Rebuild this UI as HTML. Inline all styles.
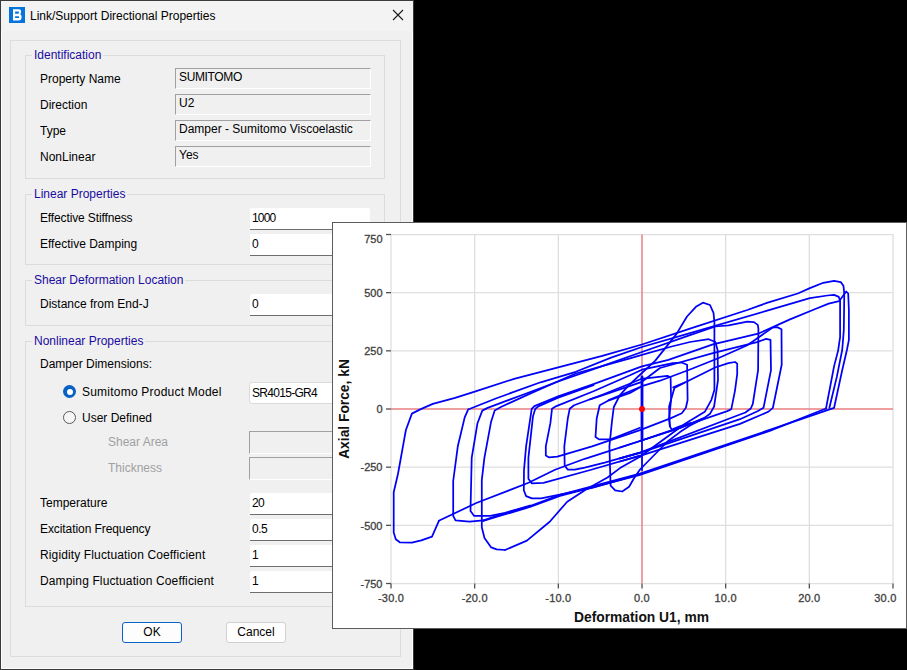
<!DOCTYPE html>
<html><head><meta charset="utf-8">
<style>
*{margin:0;padding:0;box-sizing:border-box}
html,body{width:907px;height:670px;overflow:hidden;background:#000}
body{position:relative;font-family:"Liberation Sans",sans-serif;font-size:12px;color:#000}
.a{position:absolute}
.t{position:absolute;white-space:nowrap;font-size:12px;line-height:14px}
#dlg{left:0;top:0;width:414px;height:670px;background:#f0f0f0;border:1px solid #3a3a3a}
#dlg .in{position:absolute;left:0;top:0;right:0;bottom:0;border:1px solid #fdfdfd;border-top:none}
#title{left:0;top:0;width:412px;height:30px;background:#f3f3f3}
.gb{position:absolute;border:1px solid #dcdcdc}
.gt{position:absolute;white-space:nowrap;font-size:12px;line-height:14px;color:#1a0ca0;background:#f0f0f0;padding:0 2px}
.ro{position:absolute;height:21px;border-top:1px solid #a0a0a0;border-left:1px solid #a0a0a0;border-bottom:1px solid #fff;border-right:1px solid #fff;background:#f0f0f0}
.ed{position:absolute;height:22px;background:#fff;border-bottom:1px solid #6e6e6e;border-radius:2px 2px 0 0}
.dis{position:absolute;height:23px;border-top:1px solid #a0a0a0;border-left:1px solid #a0a0a0;border-bottom:1px solid #fff;border-right:1px solid #fff;background:#f0f0f0}
.btn{position:absolute;height:21px;background:#fdfdfd;border:1px solid #d0d0d0;border-radius:3px;text-align:center;line-height:19px}
#chart{left:332px;top:222px;width:575px;height:407px;background:#fff;border:1px solid #5c5c5c}
</style></head><body>
<div id="dlg" class="a"><div class="in"></div>
  <div id="title" class="a"></div>
</div>
<!-- icon -->
<div class="a" style="left:9px;top:7px;width:16px;height:16px;background:#0574dc"></div>
<svg class="a" style="left:9px;top:7px" width="16" height="16" viewBox="0 0 16 16"><path d="M4 2.2 H10.2 C11.5 2.2 12.1 3.2 12.1 4.5 C12.1 5.8 11.6 6.6 11.3 7.2 C12.1 7.6 12.6 8.5 12.6 9.9 C12.6 12.1 11.5 13.5 9.8 13.5 H4 Z M6.1 4.4 V6.7 H9 C9.7 6.7 10 6.2 10 5.55 C10 4.9 9.7 4.4 9 4.4 Z M6.1 9.2 V11.1 H9.2 C9.9 11.1 10.2 10.7 10.2 10.15 C10.2 9.6 9.9 9.2 9.2 9.2 Z" fill="#fff" fill-rule="evenodd"/></svg>
<div class="t" style="left:30px;top:9px">Link/Support Directional Properties</div>
<svg class="a" style="left:392px;top:9px" width="12" height="12" viewBox="0 0 12 12"><path d="M1 1L11 11M11 1L1 11" stroke="#1a1a1a" stroke-width="1.1"/></svg>

<div class="gb" style="left:10px;top:40px;width:391px;height:617px"></div>

<!-- Identification -->
<div class="gb" style="left:25px;top:55px;width:360px;height:124px"></div>
<div class="gt" style="left:32px;top:48px">Identification</div>
<div class="t" style="left:40px;top:72px">Property Name</div>
<div class="t" style="left:40px;top:98px">Direction</div>
<div class="t" style="left:40px;top:124px">Type</div>
<div class="t" style="left:40px;top:150px">NonLinear</div>
<div class="ro" style="left:175px;top:68px;width:196px"></div>
<div class="ro" style="left:175px;top:94px;width:196px"></div>
<div class="ro" style="left:175px;top:120px;width:196px"></div>
<div class="ro" style="left:175px;top:146px;width:196px"></div>
<div class="t" style="left:179px;top:70px;letter-spacing:-0.35px">SUMITOMO</div>
<div class="t" style="left:179px;top:96px">U2</div>
<div class="t" style="left:179px;top:122px">Damper - Sumitomo Viscoelastic</div>
<div class="t" style="left:179px;top:148px">Yes</div>

<!-- Linear -->
<div class="gb" style="left:25px;top:194px;width:360px;height:71px"></div>
<div class="gt" style="left:32px;top:187px">Linear Properties</div>
<div class="t" style="left:40px;top:211px;letter-spacing:-0.13px">Effective Stiffness</div>
<div class="t" style="left:40px;top:237px">Effective Damping</div>
<div class="ed" style="left:250px;top:208px;width:120px"></div>
<div class="ed" style="left:250px;top:234px;width:120px"></div>
<div class="t" style="left:252px;top:211px;letter-spacing:-0.8px">1000</div>
<div class="t" style="left:252px;top:237px">0</div>

<!-- Shear -->
<div class="gb" style="left:25px;top:280px;width:360px;height:46px"></div>
<div class="gt" style="left:32px;top:273px">Shear Deformation Location</div>
<div class="t" style="left:40px;top:297px">Distance from End-J</div>
<div class="ed" style="left:250px;top:294px;width:120px"></div>
<div class="t" style="left:252px;top:297px">0</div>

<!-- Nonlinear -->
<div class="gb" style="left:25px;top:341px;width:360px;height:266px"></div>
<div class="gt" style="left:32px;top:334px">Nonlinear Properties</div>
<div class="t" style="left:40px;top:357px">Damper Dimensions:</div>
<div class="a" style="left:63px;top:385px;width:13px;height:13px;border-radius:50%;background:#0862c4"></div>
<div class="a" style="left:66.5px;top:388.5px;width:6px;height:6px;border-radius:50%;background:#fff"></div>
<div class="t" style="left:82px;top:385px;letter-spacing:0.22px">Sumitomo Product Model</div>
<div class="a" style="left:63px;top:411px;width:13px;height:13px;border-radius:50%;background:#f6f6f6;border:1px solid #585858"></div>
<div class="t" style="left:82px;top:411px">User Defined</div>
<div class="a" style="left:249px;top:382px;width:122px;height:22px;background:#fff;border:1px solid #dadada;border-radius:3px"></div>
<div class="t" style="left:252px;top:386px;letter-spacing:-0.7px">SR4015-GR4</div>
<div class="t" style="left:108px;top:435px;color:#a0a0a0">Shear Area</div>
<div class="t" style="left:108px;top:461px;color:#a0a0a0">Thickness</div>
<div class="dis" style="left:249px;top:431px;width:122px"></div>
<div class="dis" style="left:249px;top:457px;width:122px"></div>
<div class="t" style="left:40px;top:496px">Temperature</div>
<div class="t" style="left:40px;top:522px;letter-spacing:-0.08px">Excitation Frequency</div>
<div class="t" style="left:40px;top:548px;letter-spacing:0.13px">Rigidity Fluctuation Coefficient</div>
<div class="t" style="left:40px;top:574px;letter-spacing:0.13px">Damping Fluctuation Coefficient</div>
<div class="ed" style="left:250px;top:493px;width:120px"></div>
<div class="ed" style="left:250px;top:519px;width:120px"></div>
<div class="ed" style="left:250px;top:545px;width:120px"></div>
<div class="ed" style="left:250px;top:571px;width:120px"></div>
<div class="t" style="left:252px;top:496px;letter-spacing:-0.6px">20</div>
<div class="t" style="left:252px;top:522px;letter-spacing:-0.5px">0.5</div>
<div class="t" style="left:252px;top:548px">1</div>
<div class="t" style="left:252px;top:574px">1</div>

<div class="btn" style="left:122px;top:622px;width:60px;border:1px solid #0a64c8">OK</div>
<div class="btn" style="left:226px;top:622px;width:60px">Cancel</div>

<div id="chart" class="a">
<svg width="573" height="405" viewBox="333 223 573 405" style="position:absolute;left:0;top:0" id="csvg">
<line x1="474.67" y1="234.6" x2="474.67" y2="583.6" stroke="#dfdfdf" stroke-width="1.3"/>
<line x1="558.33" y1="234.6" x2="558.33" y2="583.6" stroke="#dfdfdf" stroke-width="1.3"/>
<line x1="725.67" y1="234.6" x2="725.67" y2="583.6" stroke="#dfdfdf" stroke-width="1.3"/>
<line x1="809.33" y1="234.6" x2="809.33" y2="583.6" stroke="#dfdfdf" stroke-width="1.3"/>
<line x1="391" y1="292.67" x2="893" y2="292.67" stroke="#dfdfdf" stroke-width="1.3"/>
<line x1="391" y1="350.83" x2="893" y2="350.83" stroke="#dfdfdf" stroke-width="1.3"/>
<line x1="391" y1="467.17" x2="893" y2="467.17" stroke="#dfdfdf" stroke-width="1.3"/>
<line x1="391" y1="525.34" x2="893" y2="525.34" stroke="#dfdfdf" stroke-width="1.3"/>
<rect x="391" y="234.6" width="502" height="349" fill="none" stroke="#dfdfdf" stroke-width="1.3"/>
<line x1="386" y1="234.50" x2="391" y2="234.50" stroke="#505050" stroke-width="1.3"/>
<text x="382.5" y="243.20" text-anchor="end" font-size="11" fill="#404040" stroke="#404040" stroke-width="0.3">750</text>
<line x1="386" y1="292.67" x2="391" y2="292.67" stroke="#505050" stroke-width="1.3"/>
<text x="382.5" y="296.87" text-anchor="end" font-size="11" fill="#404040" stroke="#404040" stroke-width="0.3">500</text>
<line x1="386" y1="350.83" x2="391" y2="350.83" stroke="#505050" stroke-width="1.3"/>
<text x="382.5" y="355.03" text-anchor="end" font-size="11" fill="#404040" stroke="#404040" stroke-width="0.3">250</text>
<line x1="386" y1="409.00" x2="391" y2="409.00" stroke="#505050" stroke-width="1.3"/>
<text x="382.5" y="413.20" text-anchor="end" font-size="11" fill="#404040" stroke="#404040" stroke-width="0.3">0</text>
<line x1="386" y1="467.17" x2="391" y2="467.17" stroke="#505050" stroke-width="1.3"/>
<text x="382.5" y="471.37" text-anchor="end" font-size="11" fill="#404040" stroke="#404040" stroke-width="0.3">-250</text>
<line x1="386" y1="525.34" x2="391" y2="525.34" stroke="#505050" stroke-width="1.3"/>
<text x="382.5" y="529.54" text-anchor="end" font-size="11" fill="#404040" stroke="#404040" stroke-width="0.3">-500</text>
<line x1="386" y1="583.50" x2="391" y2="583.50" stroke="#505050" stroke-width="1.3"/>
<text x="382.5" y="587.70" text-anchor="end" font-size="11" fill="#404040" stroke="#404040" stroke-width="0.3">-750</text>
<line x1="391.00" y1="583.6" x2="391.00" y2="588.5" stroke="#505050" stroke-width="1.3"/>
<text x="391.00" y="602" text-anchor="middle" font-size="11" fill="#404040" stroke="#404040" stroke-width="0.3" letter-spacing="0.2">-30.0</text>
<line x1="474.67" y1="583.6" x2="474.67" y2="588.5" stroke="#505050" stroke-width="1.3"/>
<text x="474.67" y="602" text-anchor="middle" font-size="11" fill="#404040" stroke="#404040" stroke-width="0.3" letter-spacing="0.2">-20.0</text>
<line x1="558.33" y1="583.6" x2="558.33" y2="588.5" stroke="#505050" stroke-width="1.3"/>
<text x="558.33" y="602" text-anchor="middle" font-size="11" fill="#404040" stroke="#404040" stroke-width="0.3" letter-spacing="0.2">-10.0</text>
<line x1="642.00" y1="583.6" x2="642.00" y2="588.5" stroke="#505050" stroke-width="1.3"/>
<text x="642.00" y="602" text-anchor="middle" font-size="11" fill="#404040" stroke="#404040" stroke-width="0.3" letter-spacing="0.2">0.0</text>
<line x1="725.67" y1="583.6" x2="725.67" y2="588.5" stroke="#505050" stroke-width="1.3"/>
<text x="725.67" y="602" text-anchor="middle" font-size="11" fill="#404040" stroke="#404040" stroke-width="0.3" letter-spacing="0.2">10.0</text>
<line x1="809.33" y1="583.6" x2="809.33" y2="588.5" stroke="#505050" stroke-width="1.3"/>
<text x="809.33" y="602" text-anchor="middle" font-size="11" fill="#404040" stroke="#404040" stroke-width="0.3" letter-spacing="0.2">20.0</text>
<line x1="893.00" y1="583.6" x2="893.00" y2="588.5" stroke="#505050" stroke-width="1.3"/>
<text x="896.50" y="602" text-anchor="end" font-size="11" fill="#404040" stroke="#404040" stroke-width="0.3" letter-spacing="0.2">30.0</text>
<line x1="391" y1="409" x2="893" y2="409" stroke="#e88080" stroke-width="1.5"/>
<line x1="642" y1="234.6" x2="642" y2="583.6" stroke="#e88080" stroke-width="1.5"/>
<text x="641.5" y="622" text-anchor="middle" font-size="13.8" font-weight="bold" fill="#111">Deformation U1, mm</text>
<text transform="translate(349,409) rotate(-90)" x="0" y="0" text-anchor="middle" font-size="13.8" font-weight="bold" fill="#111">Axial Force, kN</text>
<g fill="none" stroke="#0000f8" stroke-width="1.75" stroke-linejoin="round" stroke-linecap="round">
<path d="M438.8 521.2 L432.0 536.6 L421.3 540.4 L411.9 542.7 L399.8 542.3 L395.8 539.3 L393.7 532.6 L393.7 492.3 L397.8 474.8 L400.5 460.0 L403.8 441.7 L405.9 430.0 L411.9 413.6 L420.8 409.1 L432.8 403.9 L455.1 397.9 L476.3 391.2 L514.1 378.8 L558.2 367.3 L602.3 355.9 L641.9 344.5 L690.0 328.7 L747.3 310.0 L766.9 302.9 L797.8 293.5 L809.9 288.1 L823.3 282.8 L834.1 280.8 L840.8 282.1 L843.5 286.1 L844.2 292.9 L844.2 299.6 L843.8 330.5 L842.2 350.0 L836.8 376.9 L829.4 407.8"/>
<path d="M833.3 408.1 L769.7 429.9 L640.0 473.6 L560.0 494.8 L530.0 506.0 L496.2 516.0 L483.3 520.4"/>
<path d="M826.0 408.5 L769.7 430.9 L640.0 474.8 L560.0 496.0 L530.0 507.0 L496.2 517.0 L483.3 521.0"/>
<path d="M438.8 520.8 L476.3 503.0 L528.5 482.8 L555.0 469.7 L584.8 458.8 L609.6 450.8 L640.0 441.0 L680.0 428.0 L703.5 418.4"/>
<path d="M685.0 382.5 L674.4 387.9 L669.1 406.5 L669.8 426.3 L671.8 429.6 L679.7 426.3 L690.0 423.0"/>
<path d="M483.3 520.4 L469.4 521.6 L455.5 520.4 L453.2 515.8 L453.2 481.0 L457.8 446.3 L464.7 417.4 L468.2 409.3 L470.0 408.8 L496.5 398.2 L540.6 382.3 L575.8 371.8 L611.1 357.6 L641.9 347.0 L690.0 333.2 L767.2 310.6 L809.9 298.2 L827.4 295.5 L834.1 294.9 L838.8 296.9 L840.1 300.9 L840.1 337.2 L838.1 350.6 L834.1 366.1 L826.0 408.5"/>
<path d="M530.0 505.5 L505.0 512.9 L490.2 515.8 L474.0 515.8 L470.5 511.1 L471.7 457.9 L477.5 423.2 L482.3 410.6 L487.6 407.9 L522.9 394.7 L558.2 381.5 L600.0 366.8 L641.9 352.0 L690.0 335.2 L715.4 326.5 L728.6 325.4 L747.3 321.6 L754.0 322.1 L757.8 324.9 L758.4 328.7 L758.1 370.2 L752.8 403.8 L750.8 408.5 L745.4 412.5 L740.0 414.5 L640.0 452.6 L620.0 458.4"/>
<path d="M505.0 550.0 L496.6 549.4 L491.2 547.4 L484.5 538.0 L481.8 527.2 L481.8 480.2 L484.4 457.9 L491.1 421.7 L494.7 410.6 L500.9 407.0 L531.7 392.9 L575.8 373.5 L630.0 358.3 L641.9 354.9 L671.7 346.5 L690.0 342.0 L708.7 339.2 L715.4 342.0 L717.6 350.0 L718.0 380.0 L714.1 406.5 L710.1 413.7 L703.5 418.4 L680.0 428.0 L640.0 441.0"/>
<path d="M640.0 452.6 L604.6 462.7 L584.8 467.7 L574.8 469.7 L567.9 469.7 L564.7 465.7 L564.3 446.3 L567.8 418.5 L569.7 408.8 L574.1 405.3 L602.3 394.7 L629.7 383.8 L641.6 378.8 L667.4 375.9 L670.6 377.4 L671.1 400.0 L669.0 419.2 L670.0 426.4"/>
<path d="M505.0 550.0 L526.9 540.6 L549.7 521.8 L567.2 501.7 L586.0 489.6 L607.5 477.5 L620.0 468.1 L640.0 456.7"/>
<path d="M640.0 455.6 L592.1 469.5 L543.5 482.9 L531.9 483.4 L528.4 478.7 L528.4 457.9 L533.0 416.2 L535.3 408.8 L538.8 406.1 L558.2 397.6 L593.5 385.2"/>
<path d="M640.0 430.1 L592.1 446.3 L557.3 456.7 L549.2 457.4 L545.8 455.6 L545.8 446.3 L550.4 423.2 L552.0 408.8 L556.4 406.1 L593.5 391.2 L630.0 375.3 L641.9 369.7 L672.8 363.1 L681.6 362.5 L687.1 364.7 L687.6 400.0 L685.9 407.8 L681.8 413.2 L670.4 418.4 L640.0 430.1"/>
<path d="M640.0 427.8 L610.6 439.4 L599.0 439.4 L595.5 437.0 L596.7 418.5 L599.7 405.3 L607.6 400.9 L630.0 392.9 L641.9 386.2"/>
<path d="M640.0 456.7 L685.0 423.7 L704.8 411.8 L711.4 399.8 L714.4 390.0 L714.4 321.8 L713.5 312.9 L710.0 305.0 L702.9 302.7 L695.9 306.8 L687.0 316.5 L676.4 334.1 L655.3 360.6 L641.9 373.0 L628.2 385.8 L619.8 395.3 L613.8 407.0 L612.0 421.1 L609.4 446.3 L610.6 485.7 L615.2 490.3 L622.2 491.5 L629.1 486.8 L633.7 478.7 L640.0 469.5 L667.5 441.5 L680.0 432.1 L690.0 425.5 L705.0 418.0"/>
<path d="M642.0 377.0 L642.0 470.0"/>
<path d="M673.2 387.3 L686.5 381.8 L715.1 367.5 L728.4 363.1 L735.0 362.0 L737.2 363.6 L737.2 374.1 L735.0 390.6 L731.3 409.1 L727.3 411.1 L640.0 441.0 L620.0 447.5"/>
<path d="M640.0 474.1 L592.1 488.0 L541.1 498.4 L531.9 498.4 L526.1 496.1 L523.8 490.3 L524.0 470.0 L526.1 446.3 L531.7 408.8 L534.4 406.1 L558.2 396.4 L593.5 384.1 L641.9 366.4 L668.4 359.8 L712.9 344.3 L759.2 333.3 L790.0 319.4 L815.3 309.0 L828.7 303.6 L839.1 301.2 L846.2 291.5 L848.2 293.5 L848.9 310.3 L848.9 339.9 L846.9 350.0 L842.2 370.2 L834.1 407.8"/>
<path d="M590.0 399.3 L600.0 396.2 L641.9 381.8 L660.0 368.0 L712.9 353.2 L757.0 342.1 L766.1 338.9 L770.5 339.8 L771.0 370.2 L763.5 407.8 L757.5 411.2 L740.0 419.2 L640.0 452.8 L620.0 458.4"/>
<path d="M608.8 400.0 L641.9 386.2 L660.0 380.7 L690.0 369.5 L717.6 358.5 L747.3 345.3 L772.7 327.6 L777.1 327.1 L781.5 329.3 L781.7 364.8 L772.9 407.8 L768.2 411.8 L740.0 423.9 L640.0 455.8 L620.0 461.5"/>
<path d="M642 377 L642 440" stroke-width="2.8"/>
</g>
<circle cx="642" cy="409" r="3" fill="#ff0000"/>
</svg>
</div>
</body></html>
